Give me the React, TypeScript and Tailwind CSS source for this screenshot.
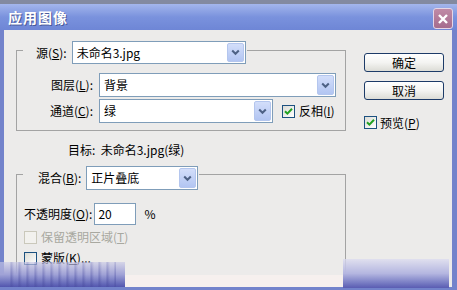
import React from 'react';

const Chevron: React.FC = () => (
  <svg width="9" height="7" viewBox="0 0 9 7">
    <path d="M1.2 1.5 L4.5 4.8 L7.8 1.5" fill="none" stroke="#4d6185" strokeWidth="2" />
  </svg>
);

const Select: React.FC<{ value: string; className: string }> = ({ value, className }) => (
  <div className={`flex items-stretch bg-white border border-[#7f9db9] ${className}`}>
    <span className="flex-1 pl-[4px] flex items-center text-[12px] text-black">{value}</span>
    <span className="m-[1px] w-[17px] flex items-center justify-center rounded-[2px] border border-[#b4c6ee] bg-gradient-to-b from-[#d3defa] to-[#b2c5f2]">
      <Chevron />
    </span>
  </div>
);

const Check: React.FC<{ checked?: boolean; disabled?: boolean }> = ({ checked, disabled }) => (
  <span
    className={`w-[13px] h-[13px] flex items-center justify-center border ${
      disabled ? 'border-[#cac8bb] bg-[#f2f1ee]' : 'border-[#1c5180] bg-gradient-to-br from-[#dcdcd6] to-white'
    }`}
  >
    {checked && (
      <svg width="9" height="9" viewBox="0 0 9 9">
        <path d="M1 4.2 L3.4 6.6 L8 1.8" fill="none" stroke="#21a121" strokeWidth="2" />
      </svg>
    )}
  </span>
);

const Btn: React.FC<{ children: React.ReactNode; className?: string }> = ({ children, className = '' }) => (
  <div
    className={`w-[80px] h-[19px] flex items-center justify-center rounded-[3px] border border-[#1d3b68] bg-gradient-to-b from-white via-[#f4f4f2] to-[#dcdcd6] text-[12px] text-black ${className}`}
  >
    {children}
  </div>
);

export default function App() {
  return (
    <div className="relative w-[457px] h-[290px] overflow-hidden bg-[#ecebea] font-['Noto_Sans_CJK_SC',sans-serif] leading-none">
      {/* title bar */}
      <div className="h-[30px] flex items-center justify-between pl-[8px] pr-[4px] border-t-[4px] border-[#838aa0] bg-gradient-to-b from-[#a4b6ec] via-[#7a92dd] to-[#6e86d6]">
        <span className="text-[14px] font-bold text-white tracking-[1px] [text-shadow:1px_1px_0_#4a5a9a]">应用图像</span>
        <span className="w-[20px] h-[21px] mt-[3px] flex items-center justify-center rounded-[3px] border border-[#e6d6e6] bg-gradient-to-b from-[#c08aa6] to-[#a56c8e]">
          <svg width="12" height="12" viewBox="0 0 12 12">
            <path d="M2 2 L10 10 M10 2 L2 10" stroke="white" strokeWidth="2.4" />
          </svg>
        </span>
      </div>

      <div className="flex h-[260px] border-l-[4px] border-r-[5px] border-b-[3px] border-[#7383cb] pl-[12px] text-[12px] text-black">
        {/* left column */}
        <div className="w-[330px] flex flex-col">
          <fieldset className="mt-[7px] border border-[#a3a3a3] pl-[6px] pr-0 pt-[9px] pb-[7px] m-0">
            <legend className="pl-[13px] pr-[1px] pt-[4px]">
              <div className="flex items-center">
                <span>
                  源(<u>S</u>):
                </span>
                <Select value="未命名3.jpg" className="ml-[5px] w-[174px] h-[23px]" />
              </div>
            </legend>
            <div className="flex items-center h-[24px]">
              <span className="w-[70px] text-right">
                图层(<u>L</u>):
              </span>
              <Select value="背景" className="ml-[6px] w-[237px] h-[24px]" />
            </div>
            <div className="flex items-center h-[24px] mt-[2px]">
              <span className="w-[70px] text-right">
                通道(<u>C</u>):
              </span>
              <Select value="绿" className="ml-[6px] w-[174px] h-[24px]" />
              <span className="ml-[9px]">
                <Check checked />
              </span>
              <span className="ml-[4px]">
                反相(<u>I</u>)
              </span>
            </div>
          </fieldset>

          <div className="mt-[11px] pl-[52px] h-[16px] flex items-center">目标:&nbsp; 未命名3.jpg(绿)</div>

          <fieldset className="mt-[1px] border border-[#a3a3a3] pl-[6px] pr-0 pt-[13px] pb-[9px] m-0">
            <legend className="pl-[15px] pr-[1px] pt-[7px]">
              <div className="flex items-center">
                <span>
                  混合(<u>B</u>):
                </span>
                <Select value="正片叠底" className="ml-[5px] w-[112px] h-[24px]" />
              </div>
            </legend>
            <div className="flex items-center h-[22px]">
              <span className="ml-[1px]">
                不透明度(<u>O</u>):
              </span>
              <div className="ml-[2px] w-[42px] h-[22px] bg-white border border-[#7f9db9] flex items-center pl-[3px]">20</div>
              <span className="ml-[8px]">%</span>
            </div>
            <div className="flex items-center h-[16px] mt-[4px] ml-[1px]">
              <Check disabled />
              <span className="ml-[4px] text-[#a8a8a0]">
                保留透明区域(<u>T</u>)
              </span>
            </div>
            <div className="flex items-center h-[16px] mt-[5px] ml-[1px]">
              <Check />
              <span className="ml-[4px]">
                蒙版(<u>K</u>)...
              </span>
            </div>
          </fieldset>
        </div>

        {/* right column */}
        <div className="ml-[18px] flex flex-col pt-[23px]">
          <Btn>确定</Btn>
          <Btn className="mt-[9px]">取消</Btn>
          <div className="flex items-center mt-[16px]">
            <Check checked />
            <span className="ml-[3px]">
              预览(<u>P</u>)
            </span>
          </div>
        </div>
      </div>

      {/* light band under the blend group */}
      <div className="absolute left-[125px] bottom-[3px] w-[220px] h-[12px] bg-[#f6f0ee]" />
      {/* blurred watermark smears along the bottom edge */}
      <div className="absolute left-0 bottom-[3px] w-[125px] h-[25px] bg-gradient-to-b from-[#c8c8e6a0] via-[#a0a2d6] to-[#5255ae]" />
      <div className="absolute left-[6px] bottom-[3px] w-[110px] h-[25px] bg-[repeating-linear-gradient(90deg,#4a4da000_0px,#4a4da000_4px,#4a4da090_5px,#4a4da000_8px)] [mask-image:linear-gradient(to_bottom,#0006,black)]" />
      <div className="absolute left-[343px] bottom-[2px] w-[106px] h-[29px] bg-gradient-to-b from-[#dcdcf0c0] via-[#b4b6e0] to-[#5a5cb2]" />
    </div>
  );
}
